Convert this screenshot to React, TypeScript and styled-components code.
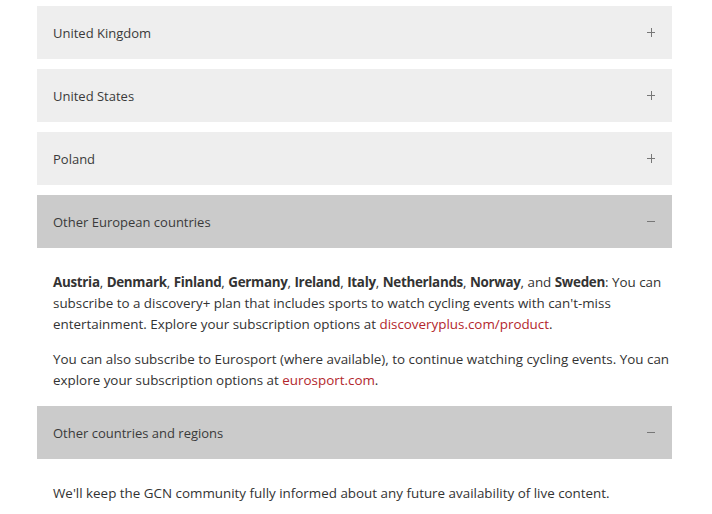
import React, { useState } from "react";
import styled, { createGlobalStyle } from "styled-components";

const GlobalStyle = createGlobalStyle`
  body {
    margin: 0;
    background: #ffffff;
    font-family: "Open Sans", "Noto Sans", sans-serif;
    color: #333333;
  }
`;

const Wrapper = styled.div`
  width: 635px;
  padding: 6px 0 0 37px;
  display: flex;
  flex-direction: column;
`;

const Item = styled.div<{ $open: boolean }>`
  margin-bottom: ${(p) => (p.$open ? "0" : "10px")};
`;

const Header = styled.button<{ $open: boolean }>`
  width: 100%;
  height: 53px;
  border: none;
  margin: 0;
  padding: 0 17px 0 16px;
  display: flex;
  align-items: center;
  justify-content: space-between;
  background: ${(p) => (p.$open ? "#cbcbcb" : "#eeeeee")};
  font-family: inherit;
  font-size: 13px;
  color: #3a3a3a;
  text-align: left;
  cursor: pointer;
`;

const Sign = styled.span`
  width: 8px;
  height: 9px;
  position: relative;
  &::before,
  &::after {
    content: "";
    position: absolute;
    background: #777777;
  }
  &::before {
    left: 0;
    right: 0;
    top: 4px;
    height: 1px;
  }
`;

const Plus = styled(Sign)`
  &::after {
    top: 0;
    bottom: 0;
    left: 4px;
    width: 1px;
  }
`;

const Panel = styled.div`
  padding: 24px 0 1px 16px;
  font-size: 13.4px;
  line-height: 21px;
  color: #333333;

  b {
    font-weight: 700;
    letter-spacing: -0.3px;
  }
`;

const Para = styled.p`
  margin: 0 0 14px;
`;

const Link = styled.a`
  color: #b3262d;
  text-decoration: none;
`;

type Section = {
  title: string;
  body?: React.ReactNode;
};

const sections: Section[] = [
  { title: "United Kingdom" },
  { title: "United States" },
  { title: "Poland" },
  {
    title: "Other European countries",
    body: (
      <>
        <Para>
          <b>Austria</b>, <b>Denmark</b>, <b>Finland</b>, <b>Germany</b>,{" "}
          <b>Ireland</b>, <b>Italy</b>, <b>Netherlands</b>, <b>Norway</b>, and{" "}
          <b>Sweden</b>: You can subscribe to a discovery+ plan that includes
          sports to watch cycling events with can't-miss entertainment. Explore
          your subscription options at{" "}
          <Link href="#">discoveryplus.com/product</Link>.
        </Para>
        <Para>
          You can also subscribe to Eurosport (where available), to continue
          watching cycling events. You can explore your subscription options at{" "}
          <Link href="#">eurosport.com</Link>.
        </Para>
      </>
    ),
  },
  {
    title: "Other countries and regions",
    body: (
      <Para>
        We'll keep the GCN community fully informed about any future
        availability of live content.
      </Para>
    ),
  },
];

export default function App() {
  const [open, setOpen] = useState<number[]>([3, 4]);

  const toggle = (i: number) => {
    setOpen((prev) =>
      prev.includes(i) ? prev.filter((x) => x !== i) : [...prev, i]
    );
  };

  return (
    <>
      <GlobalStyle />
      <Wrapper>
        {sections.map((s, i) => {
          const isOpen = open.includes(i);
          return (
            <Item key={s.title} $open={isOpen}>
              <Header $open={isOpen} onClick={() => toggle(i)}>
                <span>{s.title}</span>
                {isOpen ? <Sign /> : <Plus />}
              </Header>
              {isOpen && s.body && <Panel>{s.body}</Panel>}
            </Item>
          );
        })}
      </Wrapper>
    </>
  );
}
